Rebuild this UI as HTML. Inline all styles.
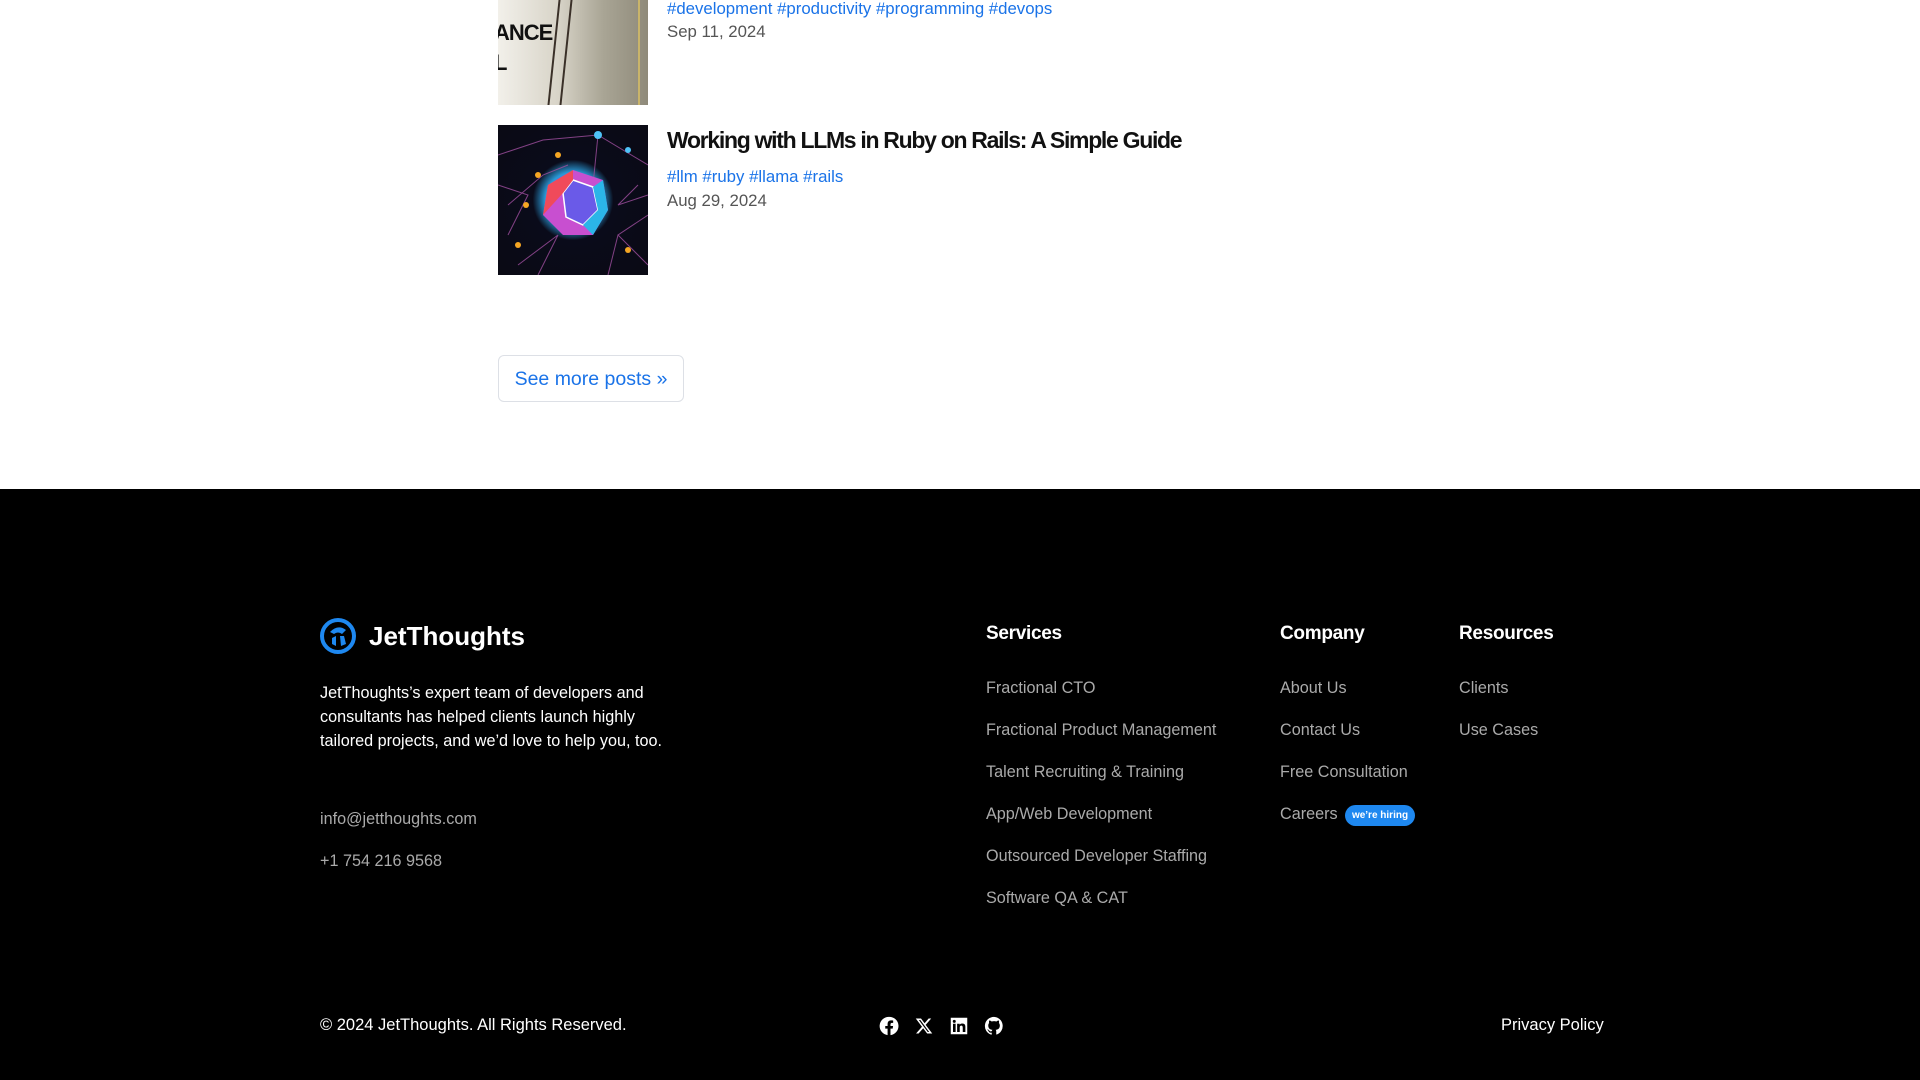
<!DOCTYPE html>
<html><head><meta charset="utf-8"><style>
*{margin:0;padding:0;box-sizing:border-box}
body{width:1920px;height:1080px;overflow:hidden;background:#fff;font-family:"Liberation Sans",sans-serif;position:relative}
.a{position:absolute;white-space:nowrap}
.tag{color:#1a73e8;font-size:16.8px}
.date{color:#555;font-size:16.8px}
footer{position:absolute;left:0;top:489px;width:1920px;height:591px;background:#000}
.h{color:#fff;font-weight:bold;font-size:19px;letter-spacing:-0.3px}
.l{color:#aaa;font-size:16.2px}
</style></head><body>
<div class="a" style="left:498px;top:0;width:150px;height:105px;background:linear-gradient(90deg,#f2f0ea 0%,#d8d4c8 40%,#a9a595 70%,#8f8a7a 100%);overflow:hidden">
<div class="a" style="left:-4px;top:20px;font-weight:bold;font-size:22px;color:#111;letter-spacing:-1px">ANCE</div>
<div class="a" style="left:-4px;top:50px;font-weight:bold;font-size:22px;color:#111">L</div>
<div class="a" style="left:55px;top:0;width:14px;height:105px;border-left:2px solid #3a3028;border-right:2px solid #3a3028;transform:skewX(-6deg)"></div>
<div class="a" style="left:140px;top:0;width:2px;height:105px;background:#c9b46a"></div>
</div>
<div class="a tag" style="left:667px;top:-1px">#development #productivity #programming #devops</div>
<div class="a date" style="left:667px;top:22px">Sep 11, 2024</div>
<div class="a" style="left:498px;top:125px;width:150px;height:150px;background:radial-gradient(circle at 50% 50%,#e03a8a 0,#7a4be0 18%,#2a9ad8 26%,#0a0b1a 38%,#0a0a14 100%);overflow:hidden">
<svg width="150" height="150" style="position:absolute;left:0;top:0"><g stroke="#a04fa0" stroke-width="1" fill="none" opacity=".8"><path d="M0 30L45 15L100 10L150 40M10 80L45 50L70 40M100 10L95 60M150 90L120 110L150 140M20 140L60 110L40 150M110 150L120 110M0 60L30 70L10 110M140 60L120 80L150 70"/></g><g fill="#f5a623"><circle cx="40" cy="50" r="3"/><circle cx="60" cy="30" r="3"/><circle cx="20" cy="120" r="3"/><circle cx="130" cy="125" r="3"/><circle cx="28" cy="80" r="3"/></g><g fill="#4fc3f7"><circle cx="100" cy="10" r="4"/><circle cx="130" cy="25" r="3"/></g><polygon points="50,60 75,45 105,55 110,85 95,110 65,110 45,90" fill="#c84fd0"/><polygon points="75,55 95,62 100,85 85,100 68,92 65,68" fill="#6a5ae8" stroke="#fff" stroke-width="1.5"/><polygon points="95,62 105,55 110,85 95,110 85,100 100,85" fill="#2bb5e8"/><polygon points="50,60 75,45 75,55 65,68 45,90" fill="#f04a5a"/></svg>
</div>
<div class="a" style="left:667px;top:127px;font-size:23px;font-weight:bold;color:#111;letter-spacing:-1.3px">Working with LLMs in Ruby on Rails: A Simple Guide</div>
<div class="a tag" style="left:667px;top:167px">#llm #ruby #llama #rails</div>
<div class="a date" style="left:667px;top:191px">Aug 29, 2024</div>
<div class="a" style="left:498px;top:355px;width:186px;height:47px;border:1px solid #dde0e6;border-radius:6px;color:#1a73e8;font-size:19.5px;text-align:center;line-height:46px">See more posts »</div>
<footer></footer>
<svg class="a" style="left:320px;top:618px" width="36" height="36" viewBox="0 0 36 36"><circle cx="18" cy="18" r="16" fill="none" stroke="#1e88f0" stroke-width="4"/><path d="M10 14 Q18 6 26 12 L22 16 Q18 13 14 16Z M12 20 L16 18 L16 28 L12 26Z M20 18 L24 18 L26 26 L21 28Z" fill="#1e88f0"/></svg>
<div class="a" style="left:369px;top:621px;color:#fff;font-weight:bold;font-size:26px">JetThoughts</div>
<div class="a" style="left:320px;top:681px;color:#fff;font-size:16.2px;line-height:24px;white-space:normal;width:360px">JetThoughts’s expert team of developers and consultants has helped clients launch highly tailored projects, and we’d love to help you, too.</div>
<div class="a l" style="left:320px;top:810px">info@jetthoughts.com</div>
<div class="a l" style="left:320px;top:852px">+1 754 216 9568</div>
<div class="a h" style="left:986px;top:623px">Services</div>
<div class="a l" style="left:986px;top:679px">Fractional CTO</div>
<div class="a l" style="left:986px;top:721px">Fractional Product Management</div>
<div class="a l" style="left:986px;top:763px">Talent Recruiting &amp; Training</div>
<div class="a l" style="left:986px;top:805px">App/Web Development</div>
<div class="a l" style="left:986px;top:847px">Outsourced Developer Staffing</div>
<div class="a l" style="left:986px;top:889px">Software QA &amp; CAT</div>
<div class="a h" style="left:1280px;top:623px">Company</div>
<div class="a l" style="left:1280px;top:679px">About Us</div>
<div class="a l" style="left:1280px;top:721px">Contact Us</div>
<div class="a l" style="left:1280px;top:763px">Free Consultation</div>
<div class="a l" style="left:1280px;top:805px">Careers</div>
<div class="a" style="left:1345px;top:805px;width:70px;height:21px;border-radius:11px;background:#1e88f0;color:#fff;font-size:10px;font-weight:bold;text-align:center;line-height:21px">we’re hiring</div>
<div class="a h" style="left:1459px;top:623px">Resources</div>
<div class="a l" style="left:1459px;top:679px">Clients</div>
<div class="a l" style="left:1459px;top:721px">Use Cases</div>
<div class="a" style="left:320px;top:1016px;color:#fff;font-size:16.5px">© 2024 JetThoughts. All Rights Reserved.</div>
<svg class="a" style="left:879px;top:1016px" width="20" height="20" viewBox="0 0 24 24"><path fill="#fff" d="M12 1a11 11 0 0 0-1.7 21.9v-7.7H7.5V12h2.8V9.6c0-2.8 1.7-4.3 4.2-4.3 1.2 0 2.5.2 2.5.2v2.7h-1.4c-1.4 0-1.8.9-1.8 1.8V12h3.1l-.5 3.2h-2.6v7.7A11 11 0 0 0 12 1z"/></svg>
<svg class="a" style="left:915px;top:1017px" width="18" height="18" viewBox="0 0 24 24"><path fill="#fff" d="M18.2 2h3.4l-7.4 8.5L23 22h-6.8l-5.3-7-6.1 7H1.4l7.9-9L1 2h7l4.8 6.4zm-1.2 18h1.9L7.1 4H5.1z"/></svg>
<svg class="a" style="left:950px;top:1017px" width="18" height="18" viewBox="0 0 24 24"><path fill="#fff" d="M1 1h22v22H1z M4 9v11h3.5V9z M5.7 3.8a2 2 0 1 0 0 4 2 2 0 0 0 0-4z M9.5 9v11H13v-5.5c0-1.5.3-3 2.1-3s1.9 1.7 1.9 3.1V20h3.5v-6.3c0-3.1-.7-5-4.3-5-1.7 0-2.9.9-3.3 1.8V9z" fill-rule="evenodd"/></svg>
<svg class="a" style="left:984px;top:1016px" width="20" height="20" viewBox="0 0 24 24"><path fill="#fff" d="M12 1a11 11 0 0 0-3.5 21.4c.6.1.8-.2.8-.5v-2c-3.1.7-3.700-1.4-3.7-1.4-.5-1.3-1.2-1.6-1.2-1.6-1-.7.1-.7.1-.7 1.1.1 1.7 1.1 1.7 1.1 1 1.7 2.6 1.2 3.2.9.1-.7.4-1.2.7-1.5-2.4-.3-5-1.2-5-5.4 0-1.2.4-2.2 1.1-2.9-.1-.3-.5-1.4.1-2.9 0 0 .9-.3 3 1.1a10 10 0 0 1 5.5 0c2.1-1.4 3-1.1 3-1.1.6 1.5.2 2.6.1 2.9.7.8 1.100 1.7 1.1 2.9 0 4.2-2.6 5.1-5 5.4.4.3.7 1 .7 2v3c0 .3.2.6.8.5A11 11 0 0 0 12 1z"/></svg>
<div class="a" style="left:1501px;top:1016px;color:#fff;font-size:16.5px">Privacy Policy</div>
</body></html>
